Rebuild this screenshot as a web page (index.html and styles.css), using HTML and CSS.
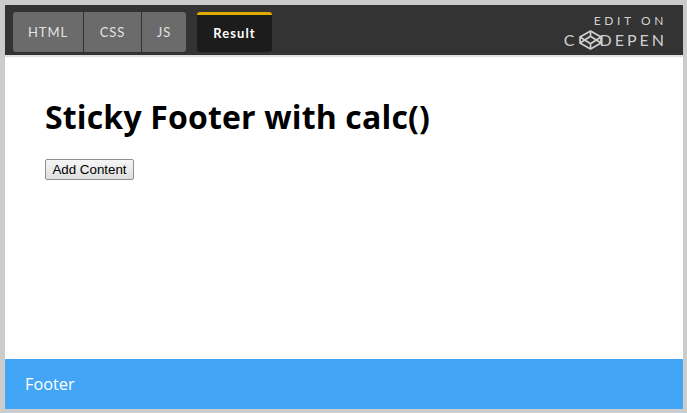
FILE: index.html
```html
<!DOCTYPE html>
<html lang="en">
<head>
    <meta charset="UTF-8">
    <title>Sticky Footer with calc()</title>
    <link rel="stylesheet" href="styles.css">
</head>
<body>
    <div class="frame">
        <header class="embed-bar">
            <nav class="tabs">
                <div class="tab-group">
                    <a class="tab tab-html">HTML</a>
                    <a class="tab tab-css">CSS</a>
                    <a class="tab tab-js">JS</a>
                </div>
                <a class="tab-active">Result</a>
            </nav>
            <div class="edit-on">
                <div class="edit-label">EDIT ON</div>
                <div class="brand">
                    <span class="brand-c">C</span>
                    <svg class="brand-icon" viewBox="0 0 23 20" width="23" height="20" fill="none" stroke="#cfcfcf" stroke-width="1.7" stroke-linejoin="round">
                        <path d="M11.5 1 22 7V13L11.5 19 1 13V7Z"/>
                        <path d="M11.5 1V6.2M11.5 13.8V19M1 7 11.5 13.8 22 7M1 13 11.5 6.2 22 13"/>
                    </svg>
                    <span class="brand-rest">DEPEN</span>
                </div>
            </div>
        </header>
        <main class="content">
            <h1 class="title">Sticky Footer with calc()</h1>
            <button class="add-btn">Add Content</button>
        </main>
        <footer class="footer">Footer</footer>
    </div>
</body>
</html>
```

FILE: styles.css
```css
* {
    box-sizing: border-box;
}
html, body {
    margin: 0;
    height: 413px;
    overflow: hidden;
}
.frame {
    height: 413px;
    border-style: solid;
    border-color: #cccccc;
    border-width: 5px 4px 4px 5px;
    display: flex;
    flex-direction: column;
    background: white;
}
.embed-bar {
    height: 50px;
    flex: none;
    background: #333333;
    box-shadow: 0 2px 1px rgba(0, 0, 0, 0.12);
    display: flex;
    justify-content: space-between;
    padding: 7px 19px 0 8px;
    position: relative;
}
.tabs {
    display: flex;
    gap: 11px;
}
.tab-group {
    display: flex;
    gap: 1px;
    height: 40px;
}
.tab {
    background: #6b6b6b;
    color: #e2e2e2;
    font: 13px Lato, sans-serif;
    letter-spacing: 0.9px;
    display: flex;
    align-items: center;
    justify-content: center;
}
.tab-html {
    width: 70px;
    border-radius: 3px 0 0 3px;
}
.tab-css {
    width: 57px;
}
.tab-js {
    width: 44px;
    border-radius: 0 3px 3px 0;
}
.tab-active {
    width: 75px;
    height: 40px;
    background: #1c1c1c;
    color: white;
    border-top: 3px solid #dfac00;
    border-radius: 3px;
    font: bold 13px Lato, sans-serif;
    letter-spacing: 1.1px;
    padding-bottom: 2px;
    display: flex;
    align-items: center;
    justify-content: center;
}
.edit-on {
    color: #cfcfcf;
    font-family: Lato, sans-serif;
    text-align: right;
}
.edit-label {
    font-size: 12px;
    line-height: 14px;
    letter-spacing: 3.6px;
    margin-top: 2px;
    margin-right: -3px;
}
.brand {
    display: flex;
    justify-content: flex-end;
    align-items: center;
    font-size: 16px;
    line-height: 20px;
    letter-spacing: 3px;
    margin-top: 2px;
    margin-right: -3px;
}
.brand-icon {
    margin: 0 -2px 0 1px;
}
.content {
    flex: 1;
    padding: 40px;
}
.title {
    margin: 0 0 20px;
    font: bold 32px/44px "Open Sans", sans-serif;
    letter-spacing: 0.16px;
    color: black;
}
.add-btn {
    display: block;
    width: 89px;
    height: 21px;
    padding: 0;
    font: 13.33px "Liberation Sans", Arial, sans-serif;
    color: black;
    background: linear-gradient(#f6f6f6, #dedede);
    border: 1px solid #8f8f8f;
    border-radius: 2px;
}
.footer {
    height: 50px;
    flex: none;
    background: #42a5f5;
    color: white;
    font: 16.3px/50px "Open Sans", sans-serif;
    padding-left: 20px;
}
```
